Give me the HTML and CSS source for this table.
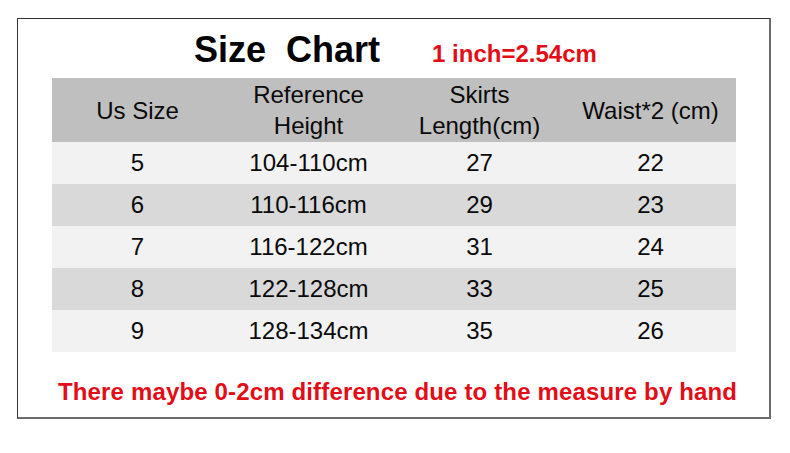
FILE: index.html
```html
<!DOCTYPE html>
<html>
<head>
<meta charset="utf-8">
<link rel="stylesheet" href="styles.css">
</head>
<body>
<div class="frame">
  <div class="title-row">
    <span class="title">Size&nbsp; Chart</span>
    <span class="inch">1 inch=2.54cm</span>
  </div>
  <table class="chart">
    <thead>
      <tr>
        <th>Us Size</th>
        <th>Reference<br>Height</th>
        <th>Skirts<br>Length(cm)</th>
        <th>Waist*2 (cm)</th>
      </tr>
    </thead>
    <tbody>
      <tr class="light"><td>5</td><td>104-110cm</td><td>27</td><td>22</td></tr>
      <tr class="dark"><td>6</td><td>110-116cm</td><td>29</td><td>23</td></tr>
      <tr class="light"><td>7</td><td>116-122cm</td><td>31</td><td>24</td></tr>
      <tr class="dark"><td>8</td><td>122-128cm</td><td>33</td><td>25</td></tr>
      <tr class="light"><td>9</td><td>128-134cm</td><td>35</td><td>26</td></tr>
    </tbody>
  </table>
  <p class="note">There maybe 0-2cm difference due to the measure by hand</p>
</div>
</body>
</html>
```
FILE: styles.css
```css
html, body {
  margin: 0;
  padding: 0;
  background: #ffffff;
}
body {
  font-family: "Liberation Sans", Arial, sans-serif;
  color: #0a0a0a;
}
.frame {
  box-sizing: border-box;
  margin: 18px 0 0 17px;
  width: 754px;
  height: 401px;
  border-top: 1px solid #333;
  border-left: 1px solid #333;
  border-right: 2px solid #6c6c6c;
  border-bottom: 2px solid #6c6c6c;
  padding: 0 33px 0 34px;
}
.title-row {
  display: flex;
  align-items: baseline;
  height: 59px;
  padding-left: 142px;
  box-sizing: border-box;
  padding-top: 8px;
}
.title {
  font-size: 36px;
  font-weight: bold;
  color: #000;
  line-height: 46px;
}
.inch {
  margin-left: 52px;
  font-size: 24px;
  font-weight: bold;
  color: #e30d17;
}
.chart {
  width: 684px;
  border-collapse: collapse;
  table-layout: fixed;
  font-size: 24px;
}
.chart th, .chart td {
  padding: 0;
  text-align: center;
  font-weight: normal;
}
.chart th {
  background: #bfbfbf;
  height: 64px;
  line-height: 31px;
}
.chart td {
  height: 42px;
  line-height: 42px;
}
.light td { background: #f2f2f2; }
.dark td { background: #d9d9d9; }
.note {
  margin: 26px 0 0 6px;
  white-space: nowrap;
  font-size: 24px;
  letter-spacing: 0.15px;
  font-weight: bold;
  color: #e30d17;
  line-height: 28px;
}
```
